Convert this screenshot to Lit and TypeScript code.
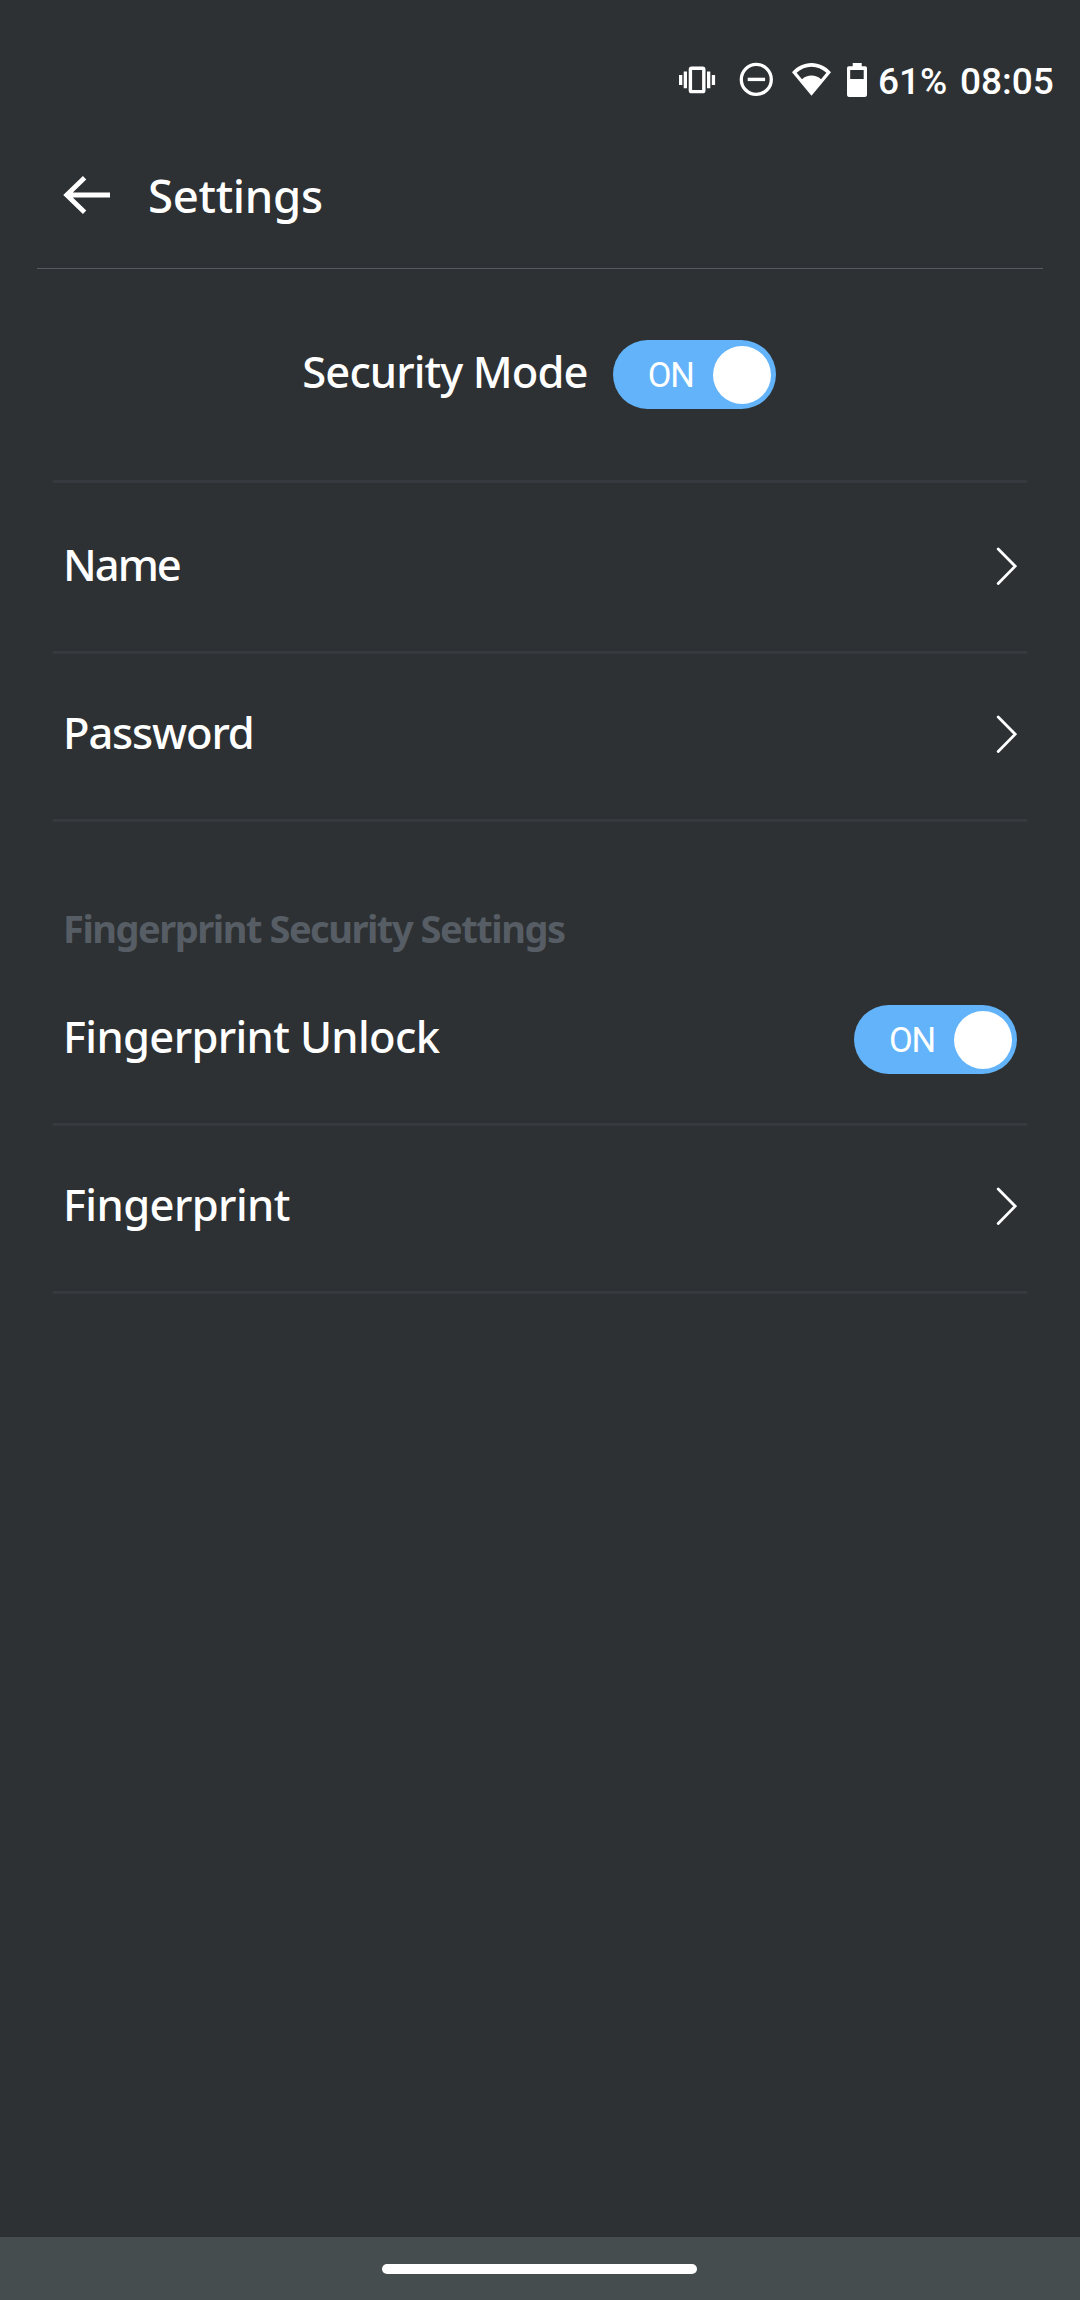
import { LitElement, html, css } from "lit";
import { customElement, property } from "lit/decorators.js";

@customElement("toggle-switch")
class ToggleSwitch extends LitElement {
  static styles = css`
    :host {
      display: block;
      flex: none;
    }
    .track {
      box-sizing: border-box;
      width: 163px;
      height: 69px;
      border-radius: 35px;
      background: #62b3f9;
      display: flex;
      align-items: center;
      justify-content: space-between;
      padding: 0 5px 0 35px;
    }
    .state {
      font: 400 34.5px/40px Roboto, sans-serif;
      color: #fff;
      letter-spacing: -1.2px;
      padding-top: 1px;
    }
    .knob {
      width: 58px;
      height: 58px;
      border-radius: 50%;
      background: #fff;
    }
  `;
  render() {
    return html`<div class="track"><span class="state">ON</span><span class="knob"></span></div>`;
  }
}

@customElement("setting-row")
class SettingRow extends LitElement {
  @property({ type: Boolean }) toggle = false;

  static styles = css`
    :host {
      display: block;
    }
    .row {
      box-sizing: border-box;
      height: 168px;
      margin: 0 53px;
      padding: 0 10px 4px;
      border-bottom: 3px solid #363a3e;
      display: flex;
      align-items: center;
      justify-content: space-between;
    }
    .row.switch {
      padding-bottom: 2px;
    }
    .label {
      font: 500 43.5px/60px "Noto Sans", sans-serif;
      color: #fff;
      padding-bottom: 6px;
    }
    .switch .label {
      padding-bottom: 8px;
    }
    svg {
      display: block;
    }
  `;
  render() {
    return html`<div class="row ${this.toggle ? "switch" : ""}">
      <span class="label"><slot></slot></span>
      ${this.toggle
        ? html`<toggle-switch></toggle-switch>`
        : html`<svg width="24" height="40" viewBox="0 0 24 40" fill="none" stroke="#fff" stroke-width="2.8" stroke-linecap="round">
            <path d="M5.2 2 22.2 19.2 5.2 36.4"></path>
          </svg>`}
    </div>`;
  }
}

@customElement("app-root")
class AppRoot extends LitElement {
  static styles = css`
    :host {
      display: block;
    }
    .screen {
      width: 1080px;
      height: 2300px;
      background: #2d3133;
      display: flex;
      flex-direction: column;
      overflow: hidden;
      font-family: "Noto Sans", sans-serif;
      color: #fff;
    }
    svg {
      display: block;
      flex: none;
    }
    .status {
      box-sizing: border-box;
      height: 126px;
      padding: 60px 26px 0 0;
      display: flex;
      justify-content: flex-end;
      align-items: flex-start;
    }
    .status-text {
      font: 500 37px/40px Roboto, sans-serif;
      white-space: pre;
    }
    .percent {
      margin: 2px 13px 0 10px;
      width: 69px;
    }
    .clock {
      margin-top: 2px;
      width: 94px;
    }
    .header {
      box-sizing: border-box;
      height: 143px;
      margin: 0 37px;
      padding: 0 0 5px 25px;
      border-bottom: 1px solid #555b62;
      display: flex;
      align-items: center;
    }
    .title {
      font-size: 45.5px;
      line-height: 60px;
      font-weight: 500;
      margin-left: 36px;
      letter-spacing: -0.3px;
    }
    .mode {
      box-sizing: border-box;
      height: 214px;
      margin: 0 53px 3px;
      padding-right: 2px;
      border-bottom: 3px solid #363a3e;
      display: flex;
      align-items: center;
      justify-content: center;
      gap: 25px;
    }
    .mode-label {
      font-size: 43.5px;
      line-height: 60px;
      font-weight: 500;
      letter-spacing: -0.9px;
      padding-bottom: 8px;
    }
    .name {
      letter-spacing: -2px;
    }
    .password {
      letter-spacing: -1.15px;
    }
    .unlock {
      letter-spacing: -0.65px;
    }
    .fingerprint {
      letter-spacing: -0.6px;
    }
    .section {
      box-sizing: border-box;
      height: 136px;
      padding: 80px 63px 0;
      font-size: 38px;
      line-height: 52px;
      font-weight: 700;
      letter-spacing: -1.47px;
      color: #575d65;
    }
    .nav {
      box-sizing: border-box;
      margin-top: auto;
      height: 63px;
      padding-right: 1px;
      background: #464d4f;
      display: flex;
      align-items: center;
      justify-content: center;
    }
    .pill {
      width: 315px;
      height: 10px;
      border-radius: 5px;
      background: #fff;
    }
  `;
  render() {
    return html`<div class="screen">
      <div class="status">
        <svg width="191" height="40" viewBox="677 60 191 40" fill="#fff">
          <path d="M679 75h3.3v10h-3.3zM683.7 71.6h3.3v16.6h-3.3zM707 71.6h3.3v16.6h-3.3zM711.8 75h3.3v10h-3.3z"></path>
          <rect x="690.4" y="68.2" width="13.4" height="23.4" rx="1.2" fill="none" stroke="#fff" stroke-width="3.4"></rect>
          <circle cx="756.3" cy="79.4" r="15" fill="none" stroke="#fff" stroke-width="3.3"></circle>
          <path d="M747.7 77.7h17.4v3.4h-17.4z"></path>
          <path fill-rule="evenodd" d="M811.5 95.8 792 72.2C797 66.5 804 63 811.5 63S826 66.5 831 72.2ZM802 79.3C804.5 76.5 808 75.4 811.5 75.4S818.5 76.5 821 79.3L826.4 72.7C822 69 817 66.7 811.5 66.7S801 69 796.6 72.7Z"></path>
          <path fill-rule="evenodd" d="M852.7 63h9v3.3h3.5a1.8 1.8 0 0 1 1.8 1.8v27a1.8 1.8 0 0 1-1.8 1.8h-16.4a1.8 1.8 0 0 1-1.8-1.8v-27a1.8 1.8 0 0 1 1.8-1.8h3.9zM850.2 70v9h13.5v-9z"></path>
        </svg>
        <span class="status-text percent">61%</span>
        <span class="status-text clock">08:05</span>
      </div>
      <div class="header">
        <svg width="50" height="42" viewBox="0 0 50 42" fill="none" stroke="#fff" stroke-width="4.8">
          <path d="M48 21H4M22.6 3.7 4.7 21 22.6 38.3"></path>
        </svg>
        <span class="title">Settings</span>
      </div>
      <div class="mode">
        <span class="mode-label">Security Mode</span>
        <toggle-switch></toggle-switch>
      </div>
      <setting-row class="name">Name</setting-row>
      <setting-row class="password">Password</setting-row>
      <div class="section">Fingerprint Security Settings</div>
      <setting-row class="unlock" toggle>Fingerprint Unlock</setting-row>
      <setting-row class="fingerprint">Fingerprint</setting-row>
      <div class="nav"><div class="pill"></div></div>
    </div>`;
  }
}
